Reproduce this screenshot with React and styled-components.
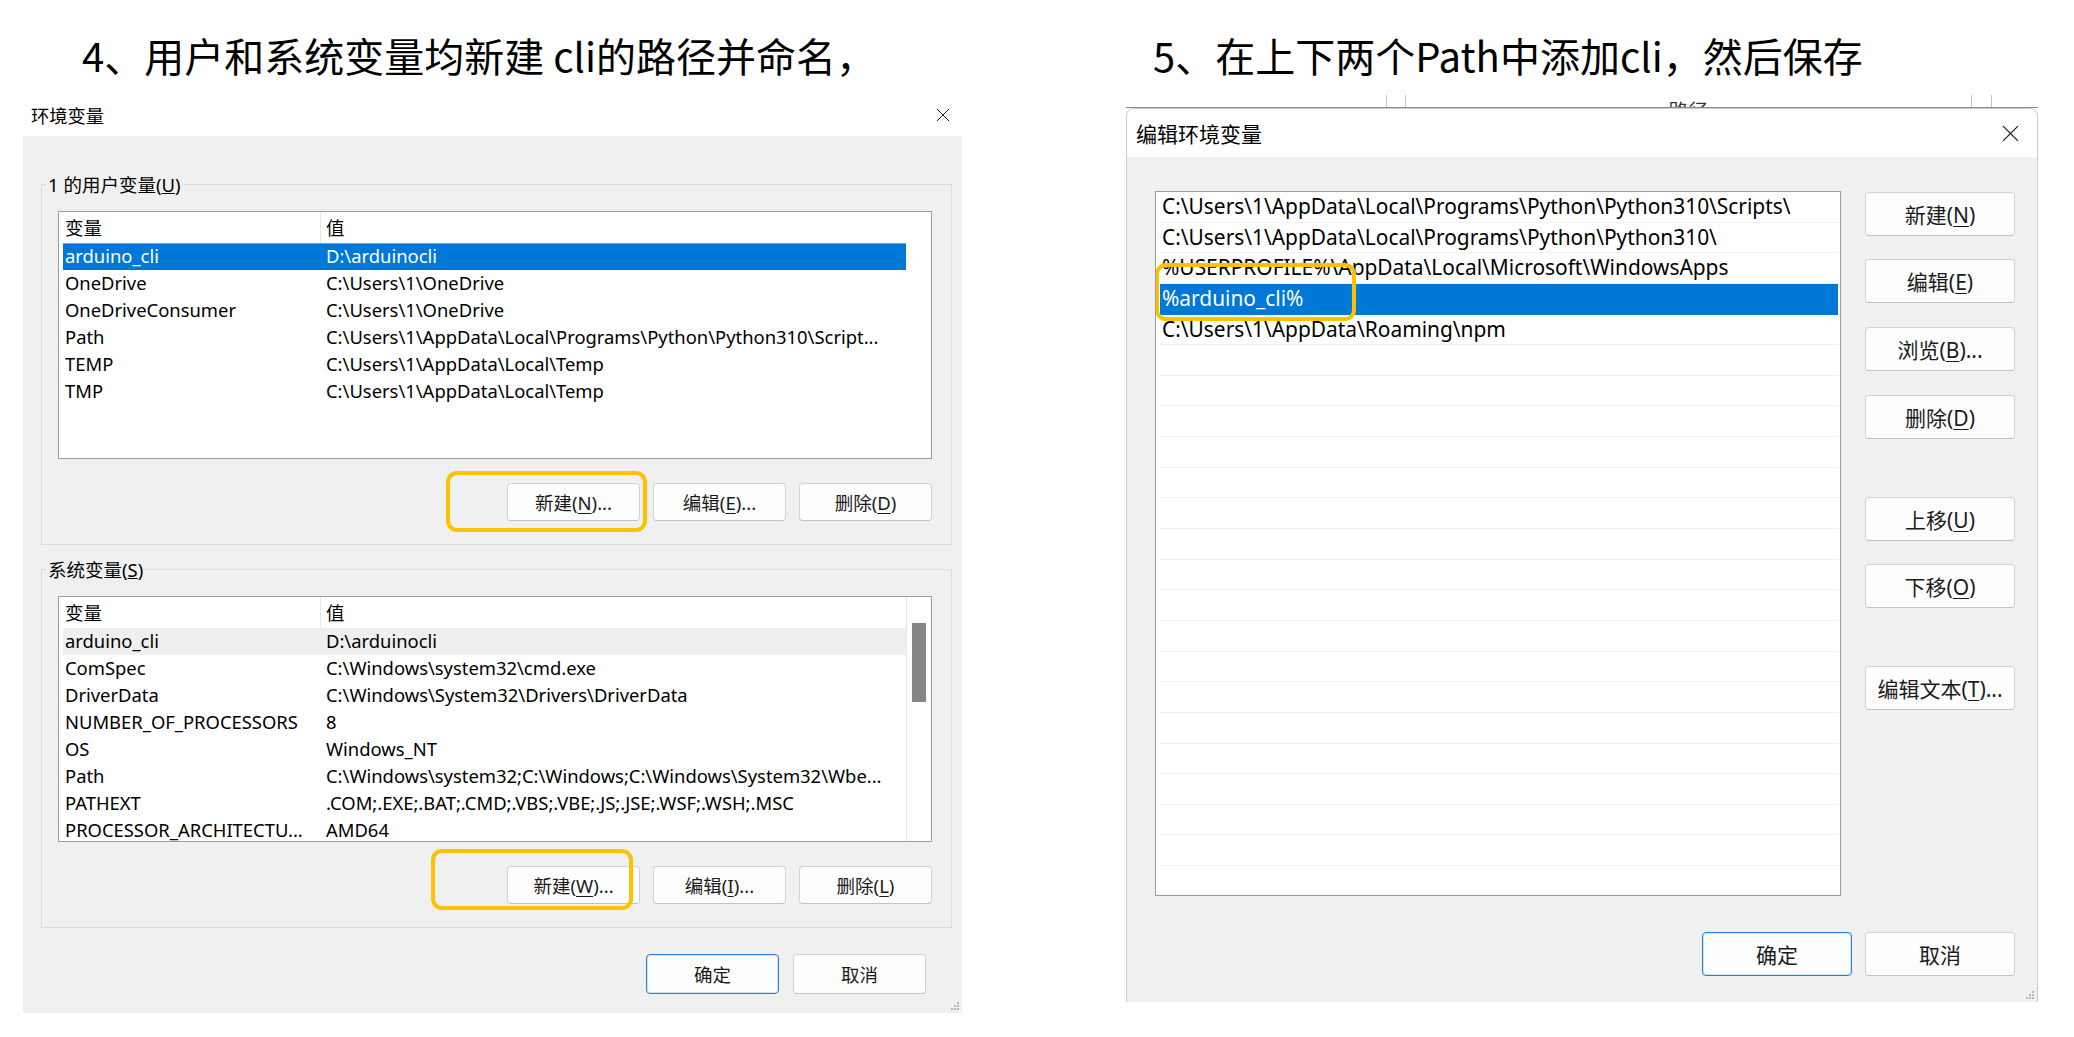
import React from 'react';
import styled, { createGlobalStyle, css } from 'styled-components';

const Global = createGlobalStyle`
  html, body { margin: 0; padding: 0; background: #ffffff; }
  body {
    width: 2074px; height: 1037px; overflow: hidden;
    font-family: "Noto Sans", "Noto Sans CJK SC", sans-serif;
    color: #000;
  }
  * { box-sizing: border-box; }
`;

const Page = styled.div`
  display: flex;
  align-items: flex-start;
  gap: 164px;
  width: 2074px;
  height: 1037px;
  padding-left: 23px;
`;

const Column = styled.section`
  display: flex;
  flex-direction: column;
  width: ${p => p.$w}px;
  flex: none;
`;

const Heading = styled.h1`
  margin: 35px 0 0 ${p => p.$indent}px;
  font-family: "Noto Sans CJK SC", sans-serif;
  font-weight: 400;
  font-size: 40px;
  line-height: 40px;
  color: #000;
  white-space: nowrap;
`;

const Window = styled.div`
  position: relative;
  display: flex;
  flex-direction: column;
  height: ${p => p.$h}px;
  margin-top: ${p => p.$mt}px;
  background: #f0f0f0;
  ${p => p.$win11 && css`
    border: 1px solid #cdcdcd;
    border-bottom: none;
    border-radius: 8px 8px 0 0;
    overflow: hidden;
  `}
`;

const TitleBar = styled.div`
  display: flex;
  align-items: center;
  justify-content: space-between;
  height: ${p => p.$h}px;
  padding: 0 ${p => p.$pr}px 0 ${p => p.$pl}px;
  background: #ffffff;
  font-family: "Noto Sans CJK SC", sans-serif;
  font-size: ${p => p.$fs}px;
  flex: none;
`;

const CloseIcon = ({ size }) => (
  <svg width={size} height={size} viewBox="0 0 16 16" fill="none">
    <path d="M1 1 L15 15 M15 1 L1 15" stroke="#111" strokeWidth="1.1" />
  </svg>
);

const Body = styled.div`
  display: flex;
  flex-direction: column;
  flex: 1;
  padding: ${p => p.$pad};
`;

const GroupBox = styled.div`
  position: relative;
  margin-top: ${p => p.$mt}px;
  border: 1px solid #dcdcdc;
  padding: 0 19px 23px 16px;
`;

const Legend = styled.div`
  width: fit-content;
  margin: -13px 0 0 -12px;
  padding: 0 2px;
  background: #f0f0f0;
  font-size: 18.5px;
  line-height: 26px;
  white-space: nowrap;
`;

const ListView = styled.div`
  display: flex;
  height: ${p => p.$h}px;
  margin-top: ${p => p.$mt}px;
  background: #ffffff;
  border: 1px solid #9c9c9c;
  overflow: hidden;
`;

const TableArea = styled.div`
  flex: 1;
  min-width: 0;
  padding-left: 4px;
  display: flex;
  flex-direction: column;
`;

const ScrollTrack = styled.div`
  width: 25px;
  flex: none;
  padding: 26px 5px 0 5px;
  background: #ffffff;
  border-left: ${p => (p.$visible ? '1px solid #e6e6e6' : 'none')};
`;

const Thumb = styled.div`
  width: 14px;
  height: 79px;
  background: #858585;
`;

const HeaderRow = styled.div`
  display: flex;
  height: 31px;
  flex: none;
  font-family: "Noto Sans CJK SC", sans-serif;
  font-size: 18.5px;
  line-height: 30px;
`;

const Row = styled.div`
  display: flex;
  height: 27px;
  flex: none;
  font-size: 18.4px;
  line-height: 26px;
  white-space: nowrap;
  ${p => p.$state === 'selected' && css`
    background: #0078d7;
    color: #ffffff;
    box-shadow: inset 0 1px 0 #6aa6dc;
  `}
  ${p => p.$state === 'hover' && css`
    background: #efefef;
  `}
`;

const NameCell = styled.div`
  width: 258px;
  flex: none;
  padding-left: 2px;
  overflow: hidden;
  ${p => p.$head && css`border-right: 1px solid #e8e8e8;`}
`;

const ValueCell = styled.div`
  flex: 1;
  min-width: 0;
  padding-left: 5px;
  overflow: hidden;
`;

const ButtonRow = styled.div`
  display: flex;
  justify-content: flex-end;
  gap: ${p => p.$gap}px;
  margin-top: ${p => p.$mt}px;
  margin-right: ${p => p.$mr || 0}px;
`;

const Button = styled.button`
  width: ${p => p.$w}px;
  height: ${p => p.$h}px;
  margin-top: ${p => p.$mt || 0}px;
  flex: none;
  padding: 0;
  background: #fdfdfd;
  border: 1px solid #d3d3d3;
  border-bottom-color: #c2c2c2;
  border-radius: 4px;
  font-family: "Noto Sans", "Noto Sans CJK SC", sans-serif;
  font-size: ${p => p.$fs}px;
  color: #1b1b1b;
  white-space: nowrap;
  ${p => p.$default && css`
    border: 1px solid #2f7fd1;
    box-shadow: inset 0 0 0 1px #cde3f8;
  `}
  u { text-underline-offset: 3px; text-decoration-thickness: 1px; }
`;

const Highlight = styled.div`
  position: absolute;
  left: ${p => p.$x}px;
  top: ${p => p.$y}px;
  width: ${p => p.$w}px;
  height: ${p => p.$h}px;
  border: 4px solid #ffc000;
  border-radius: 11px;
  pointer-events: none;
  z-index: 2;
`;

const Grip = styled.svg`
  position: absolute;
  right: 2px;
  bottom: 2px;
`;

const GripIcon = () => (
  <Grip width="10" height="10" viewBox="0 0 10 10">
    {[[8, 2], [8, 5], [5, 5], [8, 8], [5, 8], [2, 8]].map(([x, y], i) => (
      <rect key={i} x={x - 1} y={y - 1} width="2" height="2" fill="#b5b5b5" />
    ))}
  </Grip>
);

/* right dialog */
const BehindBar = styled.div`
  display: flex;
  height: 13px;
  margin-top: 20px;
  border-bottom: 1px solid #8a8a8a;
  overflow: hidden;
`;

const BehindCell = styled.div`
  width: ${p => (p.$w ? `${p.$w}px` : 'auto')};
  flex: ${p => (p.$w ? 'none' : '1')};
  border-right: ${p => (p.$w ? '1px solid #c4c4c4' : 'none')};
  display: flex;
  justify-content: center;
  overflow: hidden;
`;

const PeekText = styled.span`
  font-family: "Noto Sans CJK SC", sans-serif;
  font-size: 20px;
  line-height: 20px;
  margin-top: 6px;
  color: #333;
`;

const Main = styled.div`
  display: flex;
  gap: 24px;
`;

const PathList = styled.div`
  position: relative;
  width: 686px;
  height: 705px;
  flex: none;
  padding: 0 2px 0 4px;
  background: #ffffff;
  border: 1px solid #9c9c9c;
  overflow: hidden;
`;

const PathItem = styled.div`
  height: 30.65px;
  padding-left: 2px;
  border-bottom: 1px solid #f1f1f1;
  font-size: 20.9px;
  line-height: 29px;
  white-space: nowrap;
  overflow: hidden;
  ${p => p.$selected && css`
    background: #0078d7;
    color: #ffffff;
    border-bottom-color: #0078d7;
  `}
`;

const SideButtons = styled.div`
  display: flex;
  flex-direction: column;
`;

const userVars = [
  ['arduino_cli', 'D:\\arduinocli'],
  ['OneDrive', 'C:\\Users\\1\\OneDrive'],
  ['OneDriveConsumer', 'C:\\Users\\1\\OneDrive'],
  ['Path', 'C:\\Users\\1\\AppData\\Local\\Programs\\Python\\Python310\\Script...'],
  ['TEMP', 'C:\\Users\\1\\AppData\\Local\\Temp'],
  ['TMP', 'C:\\Users\\1\\AppData\\Local\\Temp'],
];

const sysVars = [
  ['arduino_cli', 'D:\\arduinocli'],
  ['ComSpec', 'C:\\Windows\\system32\\cmd.exe'],
  ['DriverData', 'C:\\Windows\\System32\\Drivers\\DriverData'],
  ['NUMBER_OF_PROCESSORS', '8'],
  ['OS', 'Windows_NT'],
  ['Path', 'C:\\Windows\\system32;C:\\Windows;C:\\Windows\\System32\\Wbe...'],
  ['PATHEXT', '.COM;.EXE;.BAT;.CMD;.VBS;.VBE;.JS;.JSE;.WSF;.WSH;.MSC'],
  ['PROCESSOR_ARCHITECTU...', 'AMD64'],
];

const paths = [
  'C:\\Users\\1\\AppData\\Local\\Programs\\Python\\Python310\\Scripts\\',
  'C:\\Users\\1\\AppData\\Local\\Programs\\Python\\Python310\\',
  '%USERPROFILE%\\AppData\\Local\\Microsoft\\WindowsApps',
  '%arduino_cli%',
  'C:\\Users\\1\\AppData\\Roaming\\npm',
];

const Label = ({ text, u, after = '' }) => (
  <>
    {text}(<u>{u}</u>){after}
  </>
);

function VarTable({ rows, height, mt, selected, hover, scroll }) {
  return (
    <ListView $h={height} $mt={mt}>
      <TableArea>
        <HeaderRow>
          <NameCell $head>变量</NameCell>
          <ValueCell>值</ValueCell>
        </HeaderRow>
        {rows.map(([n, v], i) => (
          <Row key={i} $state={i === selected ? 'selected' : i === hover ? 'hover' : ''}>
            <NameCell>{n}</NameCell>
            <ValueCell>{v}</ValueCell>
          </Row>
        ))}
      </TableArea>
      <ScrollTrack $visible={scroll}>{scroll && <Thumb />}</ScrollTrack>
    </ListView>
  );
}

export default function App() {
  const emptyRows = Array.from({ length: 19 });
  return (
    <>
      <Global />
      <Page>
        <Column $w={939}>
          <Heading $indent={59}>4、用户和系统变量均新建 cli的路径并命名，</Heading>
          <Window $h={920} $mt={18}>
            <TitleBar $h={43} $pl={8} $pr={12} $fs={18.3}>
              <span>环境变量</span>
              <CloseIcon size={14} />
            </TitleBar>
            <Body $pad="48px 10px 0 18px">
              <GroupBox $mt={0}>
                <Legend>1 的用户变量(<u>U</u>)</Legend>
                <VarTable rows={userVars} height={248} mt={13} selected={0} />
                <ButtonRow $gap={13} $mt={24}>
                  <Button $w={133} $h={38} $fs={18.5}><Label text="新建" u="N" after="..." /></Button>
                  <Button $w={133} $h={38} $fs={18.5}><Label text="编辑" u="E" after="..." /></Button>
                  <Button $w={133} $h={38} $fs={18.5}><Label text="删除" u="D" /></Button>
                </ButtonRow>
                <Highlight $x={404} $y={286} $w={201} $h={61} />
              </GroupBox>
              <GroupBox $mt={24}>
                <Legend>系统变量(<u>S</u>)</Legend>
                <VarTable rows={sysVars} height={246} mt={13} hover={0} scroll />
                <ButtonRow $gap={13} $mt={24}>
                  <Button $w={133} $h={38} $fs={18.5}><Label text="新建" u="W" after="..." /></Button>
                  <Button $w={133} $h={38} $fs={18.5}><Label text="编辑" u="I" after="..." /></Button>
                  <Button $w={133} $h={38} $fs={18.5}><Label text="删除" u="L" /></Button>
                </ButtonRow>
                <Highlight $x={389} $y={279} $w={202} $h={61} />
              </GroupBox>
              <ButtonRow $gap={14} $mt={26} $mr={26}>
                <Button $w={133} $h={40} $fs={18.5} $default>确定</Button>
                <Button $w={133} $h={40} $fs={18.5}>取消</Button>
              </ButtonRow>
            </Body>
            <GripIcon />
          </Window>
        </Column>

        <Column $w={912}>
          <Heading $indent={27}>5、在上下两个Path中添加cli，然后保存</Heading>
          <BehindBar>
            <BehindCell $w={261} />
            <BehindCell $w={19} />
            <BehindCell $w={566}><PeekText>路径</PeekText></BehindCell>
            <BehindCell $w={20} />
            <BehindCell />
          </BehindBar>
          <Window $h={894} $mt={0} $win11>
            <TitleBar $h={48} $pl={9} $pr={18} $fs={21}>
              <span>编辑环境变量</span>
              <CloseIcon size={17} />
            </TitleBar>
            <Body $pad="34px 22px 0 28px">
              <Main>
                <PathList>
                  {paths.map((p, i) => (
                    <PathItem key={i} $selected={i === 3}>{p}</PathItem>
                  ))}
                  {emptyRows.map((_, i) => (
                    <PathItem key={`e${i}`} />
                  ))}
                  <Highlight $x={-1} $y={71} $w={201} $h={58} />
                </PathList>
                <SideButtons>
                  <Button $w={150} $h={44} $fs={21} $mt={1}><Label text="新建" u="N" /></Button>
                  <Button $w={150} $h={44} $fs={21} $mt={23}><Label text="编辑" u="E" /></Button>
                  <Button $w={150} $h={44} $fs={21} $mt={24}><Label text="浏览" u="B" after="..." /></Button>
                  <Button $w={150} $h={44} $fs={21} $mt={24}><Label text="删除" u="D" /></Button>
                  <Button $w={150} $h={44} $fs={21} $mt={58}><Label text="上移" u="U" /></Button>
                  <Button $w={150} $h={44} $fs={21} $mt={23}><Label text="下移" u="O" /></Button>
                  <Button $w={150} $h={44} $fs={21} $mt={58}><Label text="编辑文本" u="T" after="..." /></Button>
                </SideButtons>
              </Main>
              <ButtonRow $gap={13} $mt={36}>
                <Button $w={150} $h={44} $fs={21} $default>确定</Button>
                <Button $w={150} $h={44} $fs={21}>取消</Button>
              </ButtonRow>
            </Body>
            <GripIcon />
          </Window>
        </Column>
      </Page>
    </>
  );
}
